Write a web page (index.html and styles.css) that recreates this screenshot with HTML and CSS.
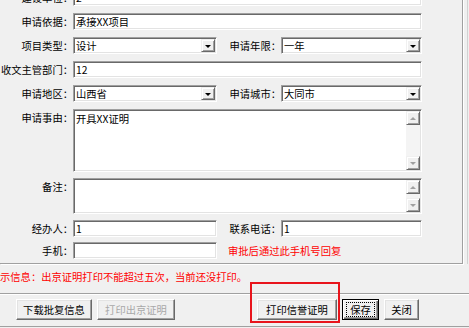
FILE: index.html
```html
<!DOCTYPE html>
<html lang="zh-CN">
<head>
    <meta charset="UTF-8">
    <title>申请信息</title>
    <link rel="stylesheet" href="styles.css">
</head>
<body>
    <div class="win">
        <div class="frame">
            <div class="group">
                <div class="form">
                    <div class="lbl">建设单位：</div>
                    <div class="box wide">2</div>

                    <div class="lbl">申请依据：</div>
                    <div class="box wide">承接XX项目</div>

                    <div class="lbl">项目类型：</div>
                    <div class="box sel"><span>设计</span><i class="drop"></i></div>
                    <div class="lbl">申请年限：</div>
                    <div class="box sel"><span>一年</span><i class="drop"></i></div>

                    <div class="lbl">收文主管部门：</div>
                    <div class="box wide">12</div>

                    <div class="lbl">申请地区：</div>
                    <div class="box sel"><span>山西省</span><i class="drop"></i></div>
                    <div class="lbl">申请城市：</div>
                    <div class="box sel"><span>大同市</span><i class="drop"></i></div>

                    <div class="lbl">申请事由：</div>
                    <div class="box wide area area-big">
                        <div class="txt">开具XX证明</div>
                        <div class="sb"><i class="up"></i><i class="down"></i></div>
                    </div>

                    <div class="lbl">备注：</div>
                    <div class="box wide area area-small">
                        <div class="txt"></div>
                        <div class="sb"><i class="up"></i><i class="down"></i></div>
                    </div>

                    <div class="lbl">经办人：</div>
                    <div class="box">1</div>
                    <div class="lbl">联系电话：</div>
                    <div class="box">1</div>

                    <div class="lbl">手机：</div>
                    <div class="box"></div>
                    <div class="note">审批后通过此手机号回复</div>
                </div>
            </div>
        </div>

        <p class="tip">示信息：出京证明打印不能超过五次，当前还没打印。</p>
        <div class="sep"></div>

        <div class="btns">
            <button class="btn w-down">下载批复信息</button>
            <button class="btn w-out" disabled>打印出京证明</button>
            <div class="mark">
                <button class="btn w-print">打印信誉证明</button>
            </div>
            <button class="btn def w-save"><span>保存</span></button>
            <button class="btn w-close">关闭</button>
        </div>
    </div>
</body>
</html>
```

FILE: styles.css
```css
body {
    margin: 0;
    background: #f0f0f0;
    font-family: "Noto Sans CJK SC", "Noto Sans", sans-serif;
    font-size: 10.3px;
    color: #000;
    overflow: hidden;
}

.win {
    width: 469px;
    height: 328px;
    overflow: hidden;
}

.frame {
    width: 467px;
    margin-top: -11px;
    border-right: 1px solid #d2d2d2;
}

.group {
    width: 462px;
    border-right: 1px solid #a0a0a0;
    border-bottom: 1px solid #a0a0a0;
    box-shadow: 1px 1px 0 #fff;
}

.form {
    display: grid;
    grid-template-columns: 73px 144px 64px 141px;
    grid-template-rows: 24px 24px 24px 24px 24px 69px 42px 22px 21px;
    align-items: start;
}

.lbl {
    text-align: right;
    line-height: 17px;
    white-space: nowrap;
    padding-right: 0;
}

.form .lbl:nth-child(n) {
    overflow: visible;
}

/* sunken edit box */
.box {
    box-sizing: border-box;
    height: 17px;
    background: #fff;
    border: 1px solid;
    border-color: #a0a0a0 #fff #fff #a0a0a0;
    box-shadow: inset 1px 1px 0 #696969, inset -1px -1px 0 #e3e3e3;
    padding: 0 2px;
    line-height: 15px;
    white-space: nowrap;
}

.wide {
    grid-column: 2 / 5;
}

.sel {
    display: flex;
    justify-content: space-between;
    align-items: center;
    padding-right: 1px;
}

.drop {
    box-sizing: border-box;
    width: 14px;
    height: 13px;
    display: flex;
    align-items: center;
    justify-content: center;
    background: #f0f0f0;
    border: 1px solid;
    border-color: #f0f0f0 #696969 #696969 #f0f0f0;
    box-shadow: inset 1px 1px 0 #fff, inset -1px -1px 0 #a0a0a0;
}

.drop::after {
    content: "";
    border-left: 3px solid transparent;
    border-right: 3px solid transparent;
    border-top: 3px solid #000;
    margin-top: 1px;
}

.area {
    display: flex;
    padding: 1px 1px 1px 2px;
    line-height: 15px;
}

.area-big {
    height: 63px;
}

.area-small {
    height: 36px;
}

.area .txt {
    flex: 1;
}

.sb {
    width: 14px;
    background: #f4f4f4;
    display: flex;
    flex-direction: column;
    justify-content: space-between;
}

.sb i {
    box-sizing: border-box;
    height: 14px;
    display: flex;
    align-items: center;
    justify-content: center;
    background: #f0f0f0;
    border: 1px solid;
    border-color: #f0f0f0 #696969 #696969 #f0f0f0;
    box-shadow: inset 1px 1px 0 #fff, inset -1px -1px 0 #a0a0a0;
}

.sb .up::after {
    content: "";
    border-left: 3px solid transparent;
    border-right: 3px solid transparent;
    border-bottom: 3px solid #a0a0a0;
}

.sb .down::after {
    content: "";
    border-left: 3px solid transparent;
    border-right: 3px solid transparent;
    border-top: 3px solid #a0a0a0;
}

.note {
    grid-column: 3 / 5;
    color: #f00;
    line-height: 17px;
    padding-left: 11px;
    white-space: nowrap;
}

.tip {
    margin: 4px 0 0;
    color: #f00;
    line-height: 18px;
    white-space: nowrap;
}

.sep {
    margin-top: 7px;
    border-top: 1px solid #a0a0a0;
    border-bottom: 1px solid #fff;
}

.btns {
    display: flex;
    gap: 5px;
    padding: 4px 0 6px 16px;
    border-bottom: 1px solid #a0a0a0;
}

.btn {
    box-sizing: border-box;
    height: 21px;
    padding: 0;
    margin: 0;
    font: inherit;
    color: #000;
    background: #f0f0f0;
    border: 1px solid;
    border-color: #fff #696969 #696969 #fff;
    box-shadow: inset -1px -1px 0 #a0a0a0, inset 1px 1px 0 #e3e3e3;
    line-height: 19px;
    text-align: center;
}

.btn:disabled {
    color: #a8a8a8;
}

.def {
    border-color: #000;
    box-shadow: inset 1px 1px 0 #fff, inset -1px -1px 0 #696969, inset -2px -2px 0 #a0a0a0;
}

.def span {
    display: inline-block;
    line-height: 13px;
    padding: 0 3px;
    outline: 1px dotted #000;
}

.w-down { width: 76px; }
.w-out { width: 78px; }
.w-print { width: 80px; }
.w-save { width: 37px; }
.w-close { width: 35px; }

.mark {
    position: relative;
    margin-left: 77px;
    display: flex;
}

/* red annotation frame around the print button */
.mark::before {
    content: "";
    position: absolute;
    left: -7px;
    top: -17px;
    width: 86px;
    height: 37px;
    border: 2px solid #e8141c;
}
```
